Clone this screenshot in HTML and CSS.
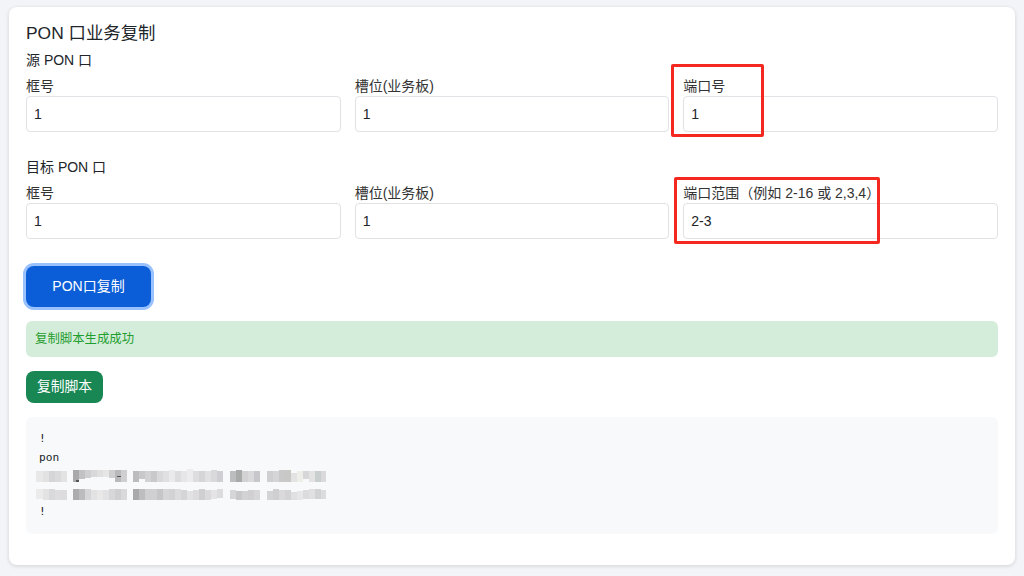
FILE: index.html
```html
<!DOCTYPE html>
<html lang="zh">
<head>
<meta charset="utf-8">
<title>PON 口业务复制</title>
<link rel="stylesheet" href="styles.css">
</head>
<body>
<main class="card">
  <h1 class="title">PON 口业务复制</h1>
  <section class="group">
    <h2 class="group-title">源 PON 口</h2>
    <div class="fields">
      <label class="field"><span class="field-label">框号</span><input class="input" value="1"></label>
      <label class="field"><span class="field-label">槽位(业务板)</span><input class="input" value="1"></label>
      <label class="field"><span class="field-label">端口号</span><input class="input" value="1"></label>
    </div>
  </section>
  <section class="group group-target">
    <h2 class="group-title">目标 PON 口</h2>
    <div class="fields">
      <label class="field"><span class="field-label">框号</span><input class="input" value="1"></label>
      <label class="field"><span class="field-label">槽位(业务板)</span><input class="input" value="1"></label>
      <label class="field"><span class="field-label">端口范围（例如 2-16 或 2,3,4）</span><input class="input" value="2-3"></label>
    </div>
  </section>
  <button class="btn-primary" type="button">PON口复制</button>
  <div class="alert">复制脚本生成成功</div>
  <button class="btn-copy" type="button">复制脚本</button>
  <div class="script-box">
    <div class="script-line">!</div>
    <div class="script-line script-line-pon">pon</div>
    <svg class="mosaic" width="290" height="36" viewBox="0 1 290 36" aria-hidden="true">
      <g>
        <rect x="0" y="5" width="7" height="11" fill="#e8e8e9"/><rect x="7" y="5" width="6" height="11" fill="#e2e2e3"/><rect x="13" y="5" width="6" height="11" fill="#d5d5d7"/><rect x="19" y="5" width="6" height="11" fill="#dadadc"/><rect x="25" y="5" width="6" height="11" fill="#e3e3e4"/>
        <rect x="37" y="4" width="6" height="12" fill="#a9a9ac"/><rect x="43" y="4" width="6" height="9" fill="#c2c2c4"/><rect x="49" y="4" width="6" height="8" fill="#cfcfd1"/><rect x="55" y="4" width="6" height="7" fill="#d8d8d9"/><rect x="61" y="4" width="6" height="7" fill="#e0e0e1"/><rect x="67" y="4" width="6" height="7" fill="#e6e6e7"/><rect x="73" y="4" width="6" height="8" fill="#cfcfd0"/><rect x="79" y="4" width="6" height="12" fill="#b9b9bb"/><rect x="85" y="4" width="6" height="12" fill="#cfcfd1"/>
        <rect x="97" y="5" width="6" height="11" fill="#bcbcbe"/><rect x="103" y="5" width="6" height="8" fill="#c8c8ca"/><rect x="109" y="5" width="6" height="11" fill="#d2d2d4"/><rect x="115" y="5" width="6" height="11" fill="#c9c9cb"/><rect x="121" y="5" width="6" height="11" fill="#d9d9db"/><rect x="127" y="5" width="6" height="11" fill="#e0e0e2"/><rect x="133" y="4" width="6" height="12" fill="#eaeaec"/><rect x="139" y="5" width="6" height="11" fill="#dcdcde"/><rect x="145" y="5" width="6" height="11" fill="#e6e6e8"/><rect x="151" y="3" width="6" height="13" fill="#ececee"/><rect x="157" y="5" width="6" height="11" fill="#dddde0"/><rect x="163" y="5" width="6" height="11" fill="#d5d5d8"/><rect x="169" y="5" width="6" height="11" fill="#e1e1e3"/><rect x="175" y="4" width="6" height="12" fill="#d9d9dc"/><rect x="181" y="5" width="6" height="11" fill="#cfcfd3"/>
        <rect x="194" y="5" width="6" height="11" fill="#bcbdbe"/><rect x="200" y="4" width="6" height="12" fill="#a8aaa9"/><rect x="206" y="5" width="6" height="11" fill="#d2d2d4"/><rect x="212" y="5" width="6" height="11" fill="#d9d9dc"/><rect x="218" y="5" width="6" height="11" fill="#c6c6cb"/>
        <rect x="231" y="5" width="6" height="11" fill="#cfcfd1"/><rect x="237" y="5" width="6" height="11" fill="#d5d5d7"/><rect x="243" y="4" width="6" height="12" fill="#c9c9c9"/><rect x="249" y="4" width="6" height="12" fill="#c8c8c4"/><rect x="255" y="7" width="6" height="9" fill="#e3e3e4"/><rect x="261" y="5" width="6" height="11" fill="#eeeee9"/><rect x="267" y="5" width="6" height="8" fill="#d7d7da"/><rect x="273" y="5" width="6" height="11" fill="#e3e3e4"/><rect x="279" y="5" width="6" height="11" fill="#c9cfcf"/><rect x="285" y="5" width="5" height="11" fill="#dadadc"/>
      </g>
      <g>
        <rect x="0" y="23" width="7" height="10" fill="#ebebec"/><rect x="7" y="23" width="6" height="11" fill="#e3e3e4"/><rect x="13" y="23" width="6" height="11" fill="#d9d9db"/><rect x="19" y="24" width="6" height="10" fill="#dddddf"/><rect x="25" y="24" width="6" height="10" fill="#dcdcde"/>
        <rect x="37" y="23" width="6" height="11" fill="#acacaf"/><rect x="43" y="23" width="6" height="11" fill="#bcbcbe"/><rect x="49" y="23" width="6" height="11" fill="#d6d6d8"/><rect x="55" y="24" width="6" height="10" fill="#e2e2e3"/><rect x="61" y="24" width="6" height="10" fill="#e8e8e9"/><rect x="67" y="24" width="6" height="10" fill="#e2e2e3"/><rect x="73" y="23" width="6" height="11" fill="#d7d7d9"/><rect x="79" y="23" width="6" height="11" fill="#cfcfd1"/><rect x="85" y="23" width="6" height="11" fill="#d9d9db"/>
        <rect x="97" y="23" width="6" height="11" fill="#a9a9ac"/><rect x="103" y="23" width="6" height="11" fill="#bdbdbf"/><rect x="109" y="23" width="6" height="11" fill="#cfcfd1"/><rect x="115" y="23" width="6" height="11" fill="#d0d0d2"/><rect x="121" y="23" width="6" height="11" fill="#c6c6c9"/><rect x="127" y="23" width="6" height="11" fill="#d6d6d8"/><rect x="133" y="23" width="6" height="11" fill="#d2d2d4"/><rect x="139" y="23" width="6" height="11" fill="#dcdcde"/><rect x="145" y="24" width="6" height="10" fill="#d5d5d7"/><rect x="151" y="25" width="6" height="9" fill="#e2e2e4"/><rect x="157" y="24" width="6" height="10" fill="#dcdcdf"/><rect x="163" y="23" width="6" height="11" fill="#cfcfd2"/><rect x="169" y="24" width="6" height="10" fill="#dadadc"/><rect x="175" y="24" width="6" height="9" fill="#e4e4e6"/><rect x="181" y="23" width="6" height="9" fill="#dcdcdf"/>
        <rect x="194" y="24" width="6" height="9" fill="#d6d6d8"/><rect x="200" y="25" width="6" height="9" fill="#c8c8cb"/><rect x="206" y="25" width="6" height="9" fill="#d2d2d4"/><rect x="212" y="24" width="6" height="10" fill="#d0d0d3"/><rect x="218" y="24" width="6" height="10" fill="#d7d7da"/>
        <rect x="231" y="25" width="6" height="9" fill="#d4d4d6"/><rect x="237" y="23" width="6" height="11" fill="#cfcfd1"/><rect x="243" y="24" width="6" height="10" fill="#d9d9db"/><rect x="249" y="24" width="6" height="10" fill="#d3d3d5"/><rect x="255" y="26" width="6" height="8" fill="#e0e0e2"/><rect x="261" y="25" width="6" height="9" fill="#e6e6e8"/><rect x="267" y="24" width="6" height="9" fill="#dcdcde"/><rect x="273" y="23" width="6" height="10" fill="#e0e0e2"/><rect x="279" y="23" width="6" height="10" fill="#d2d3d4"/><rect x="285" y="24" width="5" height="9" fill="#dcdcde"/>
      </g>
      <path fill="#555" d="M40 14h3v2h-3zM81 10h4v1h-4z"/>
    </svg>
    <div class="script-line">!</div>
  </div>
  <div class="marker marker-port"></div>
  <div class="marker marker-range"></div>
</main>
</body>
</html>
```

FILE: styles.css
```css
* { box-sizing: border-box; }
html, body { height: 100%; }
body {
  margin: 0;
  padding: 7px 9px 11px;
  background: #f3f4f8;
  font-family: "Liberation Sans", "Noto Sans CJK SC", sans-serif;
  color: #212529;
  overflow: hidden;
}
.card {
  position: relative;
  height: 558px;
  padding: 15px 17px 0;
  background: #fff;
  border-radius: 8px;
  box-shadow: 0 1px 4px rgba(0, 0, 0, .14);
}
.title {
  margin: 0;
  font-size: 17.4px;
  font-weight: 400;
  line-height: 22px;
}
.group-title {
  margin: 7px 0 0;
  font-size: 14px;
  font-weight: 400;
  line-height: 18px;
}
.group-target { margin-top: 26px; }
.group-target .group-title { margin-top: 0; }
.fields {
  display: grid;
  grid-template-columns: repeat(3, 1fr);
  gap: 14px;
  margin-top: 7px;
}
.field { display: block; }
.field-label {
  display: block;
  height: 20px;
  font-size: 14px;
  line-height: 20px;
  color: #333;
}
.input {
  display: block;
  width: 100%;
  height: 36px;
  padding: 0 7px;
  border: 1px solid #e0e2e5;
  border-radius: 4px;
  background: #fff;
  color: #212529;
  font: 14px "Liberation Sans", sans-serif;
}
.btn-primary {
  display: block;
  width: 125px;
  height: 41px;
  margin-top: 27px;
  padding: 0 0 3px;
  border: 0;
  border-radius: 8px;
  background: #0b5ed7;
  box-shadow: 0 0 0 3px #98c1fe;
  color: #fff;
  font: 14px "Liberation Sans", "Noto Sans CJK SC", sans-serif;
}
.alert {
  height: 36px;
  margin-top: 14px;
  padding: 0 9px;
  border-radius: 6px;
  background: #d4edda;
  color: #1f9d2f;
  font-size: 12.4px;
  line-height: 36px;
}
.btn-copy {
  display: block;
  width: 77px;
  height: 32px;
  margin-top: 14px;
  padding: 0 0 4px;
  border: 0;
  border-radius: 8px;
  background: #198754;
  color: #fff;
  font: 13.8px "Liberation Sans", "Noto Sans CJK SC", sans-serif;
}
.script-box {
  height: 117px;
  margin-top: 14px;
  padding: 13px 13px 0;
  border-radius: 6px;
  background: #f8f9fa;
}
.script-line {
  height: 18px;
  font: 11.2px/18px "DejaVu Sans Mono", monospace;
  color: #212529;
}
.script-line-pon { margin-top: 1px; }
.mosaic {
  display: block;
  height: 36px;
  margin-left: -3px;
}
.marker {
  position: absolute;
  border: 3px solid #f5281f;
  border-radius: 2px;
}
.marker-port { left: 662px; top: 57px; width: 93px; height: 73px; }
.marker-range { left: 665px; top: 170px; width: 206px; height: 67px; }
```
